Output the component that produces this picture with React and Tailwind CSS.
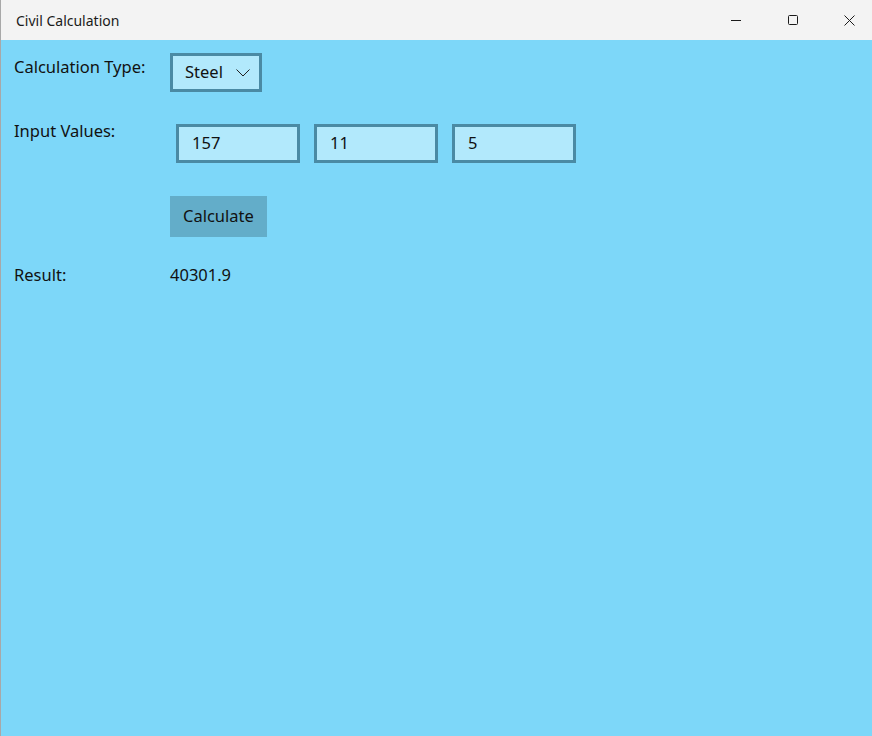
export default function App() {
  const font = { fontFamily: '"Noto Sans", "Open Sans", sans-serif' };
  return (
    <div className="w-[872px] h-[736px] flex flex-col overflow-hidden bg-[#7dd7f9] border-l border-[#a8a8a8]" style={font}>
      <div className="h-[40px] shrink-0 bg-[#f3f3f3] flex items-center">
        <span className="ml-[15px] text-[14px] text-[#1a1a1a]">Civil Calculation</span>
        <div className="ml-auto flex items-center mr-[17px]">
          <svg width="10" height="10" viewBox="0 0 10 10"><line x1="0" y1="5.5" x2="10" y2="5.5" stroke="#1a1a1a" strokeWidth="1" /></svg>
          <svg className="ml-[47px]" width="10" height="10" viewBox="0 0 10 10"><rect x="0.5" y="0.5" width="9" height="9" rx="1" fill="none" stroke="#1a1a1a" strokeWidth="1" /></svg>
          <svg className="ml-[46px]" width="11" height="11" viewBox="0 0 11 11"><path d="M0.5 0.5 L10.5 10.5 M10.5 0.5 L0.5 10.5" stroke="#1a1a1a" strokeWidth="1" /></svg>
        </div>
      </div>
      <div className="flex-1 pl-[13px] text-[16.5px] text-[#111]">
        <div className="flex mt-[13px]">
          <div className="w-[156px] pt-[2px] leading-[24px]">Calculation Type:</div>
          <div className="w-[92px] h-[39px] border-[3px] border-[#4a8aa4] bg-[#b2e9fc] flex items-center pl-[12px]">
            <span>Steel</span>
            <svg className="ml-[13px]" width="14" height="8" viewBox="0 0 14 8"><polyline points="0.5,0.5 7,7 13.5,0.5" fill="none" stroke="#222" strokeWidth="1" /></svg>
          </div>
        </div>
        <div className="flex mt-[27px]">
          <div className="w-[156px] leading-[24px]">Input Values:</div>
          <div className="flex gap-[14px] mt-[5px] ml-[6px]">
            {["157", "11", "5"].map((v) => (
              <div key={v} className="w-[124px] h-[39px] border-[3px] border-[#4a8aa4] bg-[#b2e9fc] flex items-center pl-[13px]">{v}</div>
            ))}
          </div>
        </div>
        <div className="flex mt-[33px]">
          <div className="w-[156px]" />
          <div className="w-[97px] h-[41px] bg-[#63adc9] flex items-center pl-[13px]">Calculate</div>
        </div>
        <div className="flex mt-[26px] leading-[24px]">
          <div className="w-[156px]">Result:</div>
          <div>40301.9</div>
        </div>
      </div>
    </div>
  );
}
